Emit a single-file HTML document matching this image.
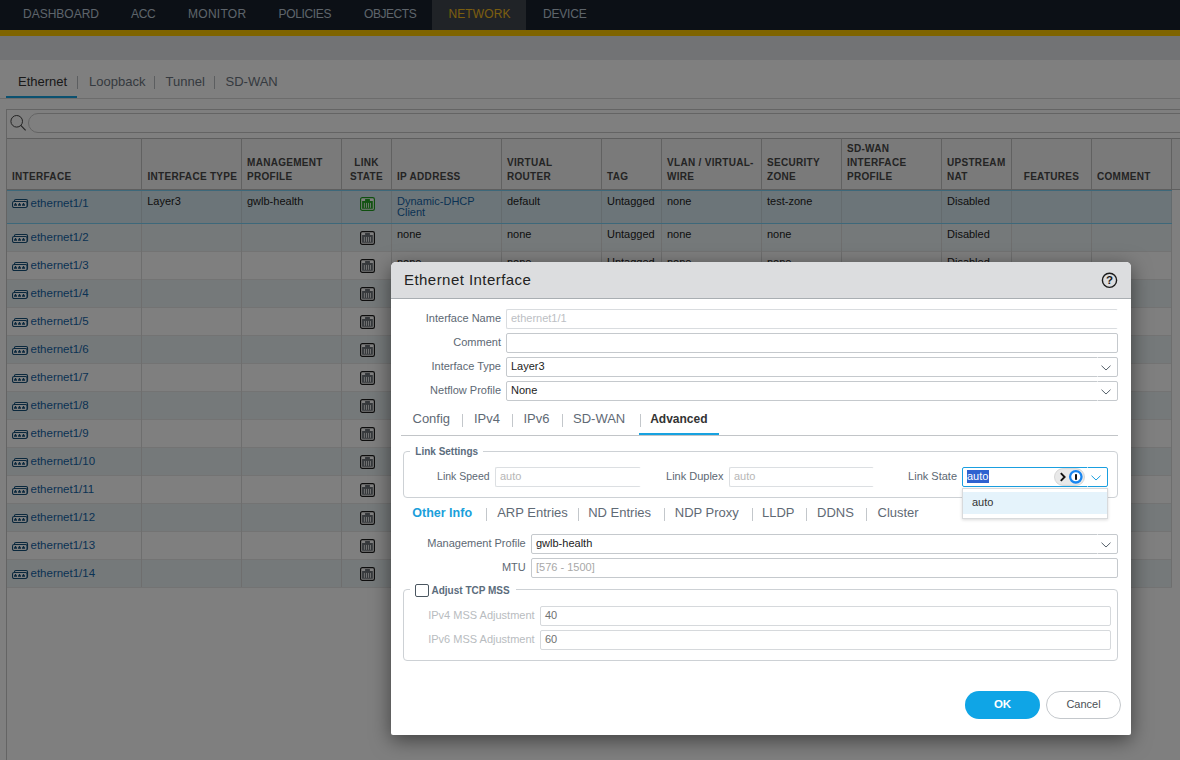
<!DOCTYPE html>
<html><head><meta charset="utf-8"><style>
html,body{margin:0;padding:0;width:1180px;height:760px;overflow:hidden;background:#fff;position:relative}
.t{position:absolute;white-space:nowrap;line-height:20px;font-family:"Liberation Sans", sans-serif}
</style></head><body>
<div style="position:absolute;left:0px;top:0px;width:1180px;height:30px;background:#18202c"></div>
<div style="position:absolute;left:432px;top:0px;width:94px;height:30px;background:#41464e"></div>
<div class="t" style="left:23px;top:3.84px;font-size:12px;font-weight:400;color:#bcc9d6;">DASHBOARD</div>
<div class="t" style="left:131px;top:3.84px;font-size:12px;font-weight:400;color:#bcc9d6;letter-spacing:-0.3px;">ACC</div>
<div class="t" style="left:188px;top:3.84px;font-size:12px;font-weight:400;color:#bcc9d6;letter-spacing:0.28px;">MONITOR</div>
<div class="t" style="left:278.5px;top:3.84px;font-size:12px;font-weight:400;color:#bcc9d6;letter-spacing:-0.35px;">POLICIES</div>
<div class="t" style="left:364px;top:3.84px;font-size:12px;font-weight:400;color:#bcc9d6;letter-spacing:-0.45px;">OBJECTS</div>
<div class="t" style="left:448.5px;top:3.84px;font-size:12px;font-weight:400;color:#f5bd1e;letter-spacing:0.1px;">NETWORK</div>
<div class="t" style="left:543px;top:3.84px;font-size:12px;font-weight:400;color:#bcc9d6;letter-spacing:-0.2px;">DEVICE</div>
<div style="position:absolute;left:0px;top:30px;width:1180px;height:6px;background:#fec800"></div>
<div style="position:absolute;left:0px;top:36px;width:1180px;height:24px;background:#e4e6ea"></div>
<div class="t" style="left:18px;top:71.50px;font-size:13px;font-weight:400;color:#333;">Ethernet</div>
<div class="t" style="left:89px;top:71.50px;font-size:13px;font-weight:400;color:#6b7480;">Loopback</div>
<div class="t" style="left:165.5px;top:71.50px;font-size:13px;font-weight:400;color:#6b7480;">Tunnel</div>
<div class="t" style="left:225.5px;top:71.50px;font-size:13px;font-weight:400;color:#6b7480;">SD-WAN</div>
<div style="position:absolute;left:77px;top:76px;width:1px;height:13px;background:#b8bcc0"></div>
<div style="position:absolute;left:154px;top:76px;width:1px;height:13px;background:#b8bcc0"></div>
<div style="position:absolute;left:214px;top:76px;width:1px;height:13px;background:#b8bcc0"></div>
<div style="position:absolute;left:0px;top:98px;width:1180px;height:1px;background:#d8d8d8"></div>
<div style="position:absolute;left:6px;top:96px;width:71px;height:2px;background:#17a2e0"></div>
<div style="position:absolute;left:6px;top:109px;width:1180px;height:29px;border:1px solid #c8c8c8;box-sizing:border-box;border-right:none;border-bottom:none"></div>
<div style="position:absolute;left:28px;top:113px;width:1200px;height:20px;border:1px solid #c8c8c8;box-sizing:border-box;border-radius:10px"></div>
<svg style="position:absolute;left:8px;top:112px" width="22" height="22"><circle cx="8.7" cy="9.3" r="5.8" fill="none" stroke="#444" stroke-width="1"/><line x1="12.8" y1="13.4" x2="17.6" y2="18.4" stroke="#444" stroke-width="1.1"/></svg>
<div style="position:absolute;left:6px;top:138px;width:1174px;height:52px;background:#f4f4f4"></div>
<div style="position:absolute;left:6px;top:138px;width:1174px;height:1px;background:#bdbdbd"></div>
<div style="position:absolute;left:141.0px;top:138px;width:1px;height:52px;background:#c2c2c2"></div>
<div style="position:absolute;left:241.0px;top:138px;width:1px;height:52px;background:#c2c2c2"></div>
<div style="position:absolute;left:341.0px;top:138px;width:1px;height:52px;background:#c2c2c2"></div>
<div style="position:absolute;left:391.0px;top:138px;width:1px;height:52px;background:#c2c2c2"></div>
<div style="position:absolute;left:501.0px;top:138px;width:1px;height:52px;background:#c2c2c2"></div>
<div style="position:absolute;left:601.0px;top:138px;width:1px;height:52px;background:#c2c2c2"></div>
<div style="position:absolute;left:661.0px;top:138px;width:1px;height:52px;background:#c2c2c2"></div>
<div style="position:absolute;left:761.0px;top:138px;width:1px;height:52px;background:#c2c2c2"></div>
<div style="position:absolute;left:841.0px;top:138px;width:1px;height:52px;background:#c2c2c2"></div>
<div style="position:absolute;left:941.0px;top:138px;width:1px;height:52px;background:#c2c2c2"></div>
<div style="position:absolute;left:1011.0px;top:138px;width:1px;height:52px;background:#c2c2c2"></div>
<div style="position:absolute;left:1091.0px;top:138px;width:1px;height:52px;background:#c2c2c2"></div>
<div style="position:absolute;left:1171.0px;top:138px;width:1px;height:52px;background:#c2c2c2"></div>
<div style="position:absolute;left:6px;top:189px;width:1174px;height:1px;background:#bcbcbc"></div>
<div class="t" style="left:12px;top:166.84px;font-size:10px;font-weight:700;color:#484848;letter-spacing:0.3px;">INTERFACE</div>
<div class="t" style="left:147.5px;top:166.84px;font-size:10px;font-weight:700;color:#484848;letter-spacing:0.3px;">INTERFACE TYPE</div>
<div class="t" style="left:247px;top:152.84px;font-size:10px;font-weight:700;color:#484848;letter-spacing:0.3px;">MANAGEMENT</div>
<div class="t" style="left:247px;top:166.84px;font-size:10px;font-weight:700;color:#484848;letter-spacing:0.3px;">PROFILE</div>
<div class="t" style="left:166.5px;width:400px;text-align:center;top:152.84px;font-size:10px;font-weight:700;color:#484848;letter-spacing:0.3px;">LINK</div>
<div class="t" style="left:166.5px;width:400px;text-align:center;top:166.84px;font-size:10px;font-weight:700;color:#484848;letter-spacing:0.3px;">STATE</div>
<div class="t" style="left:397px;top:166.84px;font-size:10px;font-weight:700;color:#484848;letter-spacing:0.3px;">IP ADDRESS</div>
<div class="t" style="left:507px;top:152.84px;font-size:10px;font-weight:700;color:#484848;letter-spacing:0.3px;">VIRTUAL</div>
<div class="t" style="left:507px;top:166.84px;font-size:10px;font-weight:700;color:#484848;letter-spacing:0.3px;">ROUTER</div>
<div class="t" style="left:607px;top:166.84px;font-size:10px;font-weight:700;color:#484848;letter-spacing:0.3px;">TAG</div>
<div class="t" style="left:667px;top:152.84px;font-size:10px;font-weight:700;color:#484848;letter-spacing:0.3px;">VLAN / VIRTUAL-</div>
<div class="t" style="left:667px;top:166.84px;font-size:10px;font-weight:700;color:#484848;letter-spacing:0.3px;">WIRE</div>
<div class="t" style="left:767px;top:152.84px;font-size:10px;font-weight:700;color:#484848;letter-spacing:0.3px;">SECURITY</div>
<div class="t" style="left:767px;top:166.84px;font-size:10px;font-weight:700;color:#484848;letter-spacing:0.3px;">ZONE</div>
<div class="t" style="left:847px;top:138.84px;font-size:10px;font-weight:700;color:#484848;letter-spacing:0.3px;">SD-WAN</div>
<div class="t" style="left:847px;top:152.84px;font-size:10px;font-weight:700;color:#484848;letter-spacing:0.3px;">INTERFACE</div>
<div class="t" style="left:847px;top:166.84px;font-size:10px;font-weight:700;color:#484848;letter-spacing:0.3px;">PROFILE</div>
<div class="t" style="left:947px;top:152.84px;font-size:10px;font-weight:700;color:#484848;letter-spacing:0.3px;">UPSTREAM</div>
<div class="t" style="left:947px;top:166.84px;font-size:10px;font-weight:700;color:#484848;letter-spacing:0.3px;">NAT</div>
<div class="t" style="left:851.5px;width:400px;text-align:center;top:166.84px;font-size:10px;font-weight:700;color:#484848;letter-spacing:0.3px;">FEATURES</div>
<div class="t" style="left:1097px;top:166.84px;font-size:10px;font-weight:700;color:#484848;letter-spacing:0.3px;">COMMENT</div>
<div style="position:absolute;left:6px;top:190px;width:1165.5px;height:1px;background:#7ad0f5"></div>
<div style="position:absolute;left:6px;top:191px;width:1165.5px;height:32px;background:#d9ebf2"></div>
<div style="position:absolute;left:6px;top:223px;width:1165.5px;height:1px;background:#7ad0f5"></div>
<div style="position:absolute;left:6px;top:224px;width:1165.5px;height:27px;background:#ebf3f5"></div>
<div style="position:absolute;left:6px;top:251px;width:1165.5px;height:1px;background:#e6e6e6"></div>
<div style="position:absolute;left:6px;top:252px;width:1165.5px;height:27px;background:#ffffff"></div>
<div style="position:absolute;left:6px;top:279px;width:1165.5px;height:1px;background:#e6e6e6"></div>
<div style="position:absolute;left:6px;top:280px;width:1165.5px;height:27px;background:#ebf3f5"></div>
<div style="position:absolute;left:6px;top:307px;width:1165.5px;height:1px;background:#e6e6e6"></div>
<div style="position:absolute;left:6px;top:308px;width:1165.5px;height:27px;background:#ffffff"></div>
<div style="position:absolute;left:6px;top:335px;width:1165.5px;height:1px;background:#e6e6e6"></div>
<div style="position:absolute;left:6px;top:336px;width:1165.5px;height:27px;background:#ebf3f5"></div>
<div style="position:absolute;left:6px;top:363px;width:1165.5px;height:1px;background:#e6e6e6"></div>
<div style="position:absolute;left:6px;top:364px;width:1165.5px;height:27px;background:#ffffff"></div>
<div style="position:absolute;left:6px;top:391px;width:1165.5px;height:1px;background:#e6e6e6"></div>
<div style="position:absolute;left:6px;top:392px;width:1165.5px;height:27px;background:#ebf3f5"></div>
<div style="position:absolute;left:6px;top:419px;width:1165.5px;height:1px;background:#e6e6e6"></div>
<div style="position:absolute;left:6px;top:420px;width:1165.5px;height:27px;background:#ffffff"></div>
<div style="position:absolute;left:6px;top:447px;width:1165.5px;height:1px;background:#e6e6e6"></div>
<div style="position:absolute;left:6px;top:448px;width:1165.5px;height:27px;background:#ebf3f5"></div>
<div style="position:absolute;left:6px;top:475px;width:1165.5px;height:1px;background:#e6e6e6"></div>
<div style="position:absolute;left:6px;top:476px;width:1165.5px;height:27px;background:#ffffff"></div>
<div style="position:absolute;left:6px;top:503px;width:1165.5px;height:1px;background:#e6e6e6"></div>
<div style="position:absolute;left:6px;top:504px;width:1165.5px;height:27px;background:#ebf3f5"></div>
<div style="position:absolute;left:6px;top:531px;width:1165.5px;height:1px;background:#e6e6e6"></div>
<div style="position:absolute;left:6px;top:532px;width:1165.5px;height:27px;background:#ffffff"></div>
<div style="position:absolute;left:6px;top:559px;width:1165.5px;height:1px;background:#e6e6e6"></div>
<div style="position:absolute;left:6px;top:560px;width:1165.5px;height:27px;background:#ebf3f5"></div>
<div style="position:absolute;left:6px;top:587px;width:1165.5px;height:1px;background:#e6e6e6"></div>
<div style="position:absolute;left:141.0px;top:191px;width:1px;height:32px;background:#c9d6dc"></div>
<div style="position:absolute;left:141.0px;top:224px;width:1px;height:363px;background:#dcdcdc"></div>
<div style="position:absolute;left:241.0px;top:191px;width:1px;height:32px;background:#c9d6dc"></div>
<div style="position:absolute;left:241.0px;top:224px;width:1px;height:363px;background:#dcdcdc"></div>
<div style="position:absolute;left:341.0px;top:191px;width:1px;height:32px;background:#c9d6dc"></div>
<div style="position:absolute;left:341.0px;top:224px;width:1px;height:363px;background:#dcdcdc"></div>
<div style="position:absolute;left:391.0px;top:191px;width:1px;height:32px;background:#c9d6dc"></div>
<div style="position:absolute;left:391.0px;top:224px;width:1px;height:363px;background:#dcdcdc"></div>
<div style="position:absolute;left:501.0px;top:191px;width:1px;height:32px;background:#c9d6dc"></div>
<div style="position:absolute;left:501.0px;top:224px;width:1px;height:363px;background:#dcdcdc"></div>
<div style="position:absolute;left:601.0px;top:191px;width:1px;height:32px;background:#c9d6dc"></div>
<div style="position:absolute;left:601.0px;top:224px;width:1px;height:363px;background:#dcdcdc"></div>
<div style="position:absolute;left:661.0px;top:191px;width:1px;height:32px;background:#c9d6dc"></div>
<div style="position:absolute;left:661.0px;top:224px;width:1px;height:363px;background:#dcdcdc"></div>
<div style="position:absolute;left:761.0px;top:191px;width:1px;height:32px;background:#c9d6dc"></div>
<div style="position:absolute;left:761.0px;top:224px;width:1px;height:363px;background:#dcdcdc"></div>
<div style="position:absolute;left:841.0px;top:191px;width:1px;height:32px;background:#c9d6dc"></div>
<div style="position:absolute;left:841.0px;top:224px;width:1px;height:363px;background:#dcdcdc"></div>
<div style="position:absolute;left:941.0px;top:191px;width:1px;height:32px;background:#c9d6dc"></div>
<div style="position:absolute;left:941.0px;top:224px;width:1px;height:363px;background:#dcdcdc"></div>
<div style="position:absolute;left:1011.0px;top:191px;width:1px;height:32px;background:#c9d6dc"></div>
<div style="position:absolute;left:1011.0px;top:224px;width:1px;height:363px;background:#dcdcdc"></div>
<div style="position:absolute;left:1091.0px;top:191px;width:1px;height:32px;background:#c9d6dc"></div>
<div style="position:absolute;left:1091.0px;top:224px;width:1px;height:363px;background:#dcdcdc"></div>
<div style="position:absolute;left:1171.0px;top:191px;width:1px;height:32px;background:#c9d6dc"></div>
<div style="position:absolute;left:1171.0px;top:224px;width:1px;height:363px;background:#dcdcdc"></div>
<div style="position:absolute;left:6px;top:138px;width:1px;height:622px;background:#c8c8c8"></div>
<svg style="position:absolute;left:11px;top:198px" width="18" height="11" viewBox="0 0 18 11"><rect x="3.45" y="1.45" width="13.1" height="7.2" rx="1.5" fill="#fff" stroke="#14507a" stroke-width="1.1"/><rect x="1.55" y="3.5" width="14.5" height="6" rx="1.6" fill="#fff" stroke="#14507a" stroke-width="1.1"/><path d="M3.0 7.85 V6.2 H3.85 V4.9 H5.15 V6.2 H6.0 V7.85Z M7.0 7.85 V6.2 H7.85 V4.9 H9.15 V6.2 H10.0 V7.85Z M11.0 7.85 V6.2 H11.85 V4.9 H13.15 V6.2 H14.0 V7.85Z " fill="#14507a"/></svg>
<div class="t" style="left:30.5px;top:192.72px;font-size:11.5px;font-weight:400;color:#1565a8;">ethernet1/1</div>
<svg style="position:absolute;left:360px;top:197px" width="15" height="14" viewBox="0 0 15 14"><rect x="0.6" y="0.6" width="13.8" height="12.8" rx="1.7" fill="#ffffff" stroke="#1f9f1f" stroke-width="1.2"/><path d="M2.1 4.1 H5.1 V2.1 H9.9 V4.1 H12.8 V11.7 H2.1Z" fill="#26a626"/><path d="M4.4 5.9 V10.8 M6.5 5.9 V10.8 M8.5 5.9 V10.8 M10.5 5.9 V10.8 " stroke="#ffffff" stroke-width="0.8"/></svg>
<div class="t" style="left:147.2px;top:191.19px;font-size:11px;font-weight:400;color:#222;">Layer3</div>
<div class="t" style="left:247px;top:191.19px;font-size:11px;font-weight:400;color:#222;">gwlb-health</div>
<div class="t" style="left:397px;top:191.19px;font-size:11px;font-weight:400;color:#1565a8;">Dynamic-DHCP</div>
<div class="t" style="left:397px;top:201.69px;font-size:11px;font-weight:400;color:#1565a8;">Client</div>
<div class="t" style="left:507px;top:191.19px;font-size:11px;font-weight:400;color:#222;">default</div>
<div class="t" style="left:607px;top:191.19px;font-size:11px;font-weight:400;color:#222;">Untagged</div>
<div class="t" style="left:667px;top:191.19px;font-size:11px;font-weight:400;color:#222;">none</div>
<div class="t" style="left:767px;top:191.19px;font-size:11px;font-weight:400;color:#222;">test-zone</div>
<div class="t" style="left:947px;top:191.19px;font-size:11px;font-weight:400;color:#222;">Disabled</div>
<svg style="position:absolute;left:11px;top:232.8px" width="18" height="11" viewBox="0 0 18 11"><rect x="3.45" y="1.45" width="13.1" height="7.2" rx="1.5" fill="#fff" stroke="#14507a" stroke-width="1.1"/><rect x="1.55" y="3.5" width="14.5" height="6" rx="1.6" fill="#fff" stroke="#14507a" stroke-width="1.1"/><path d="M3.0 7.85 V6.2 H3.85 V4.9 H5.15 V6.2 H6.0 V7.85Z M7.0 7.85 V6.2 H7.85 V4.9 H9.15 V6.2 H10.0 V7.85Z M11.0 7.85 V6.2 H11.85 V4.9 H13.15 V6.2 H14.0 V7.85Z " fill="#14507a"/></svg>
<div class="t" style="left:30.5px;top:226.82px;font-size:11.5px;font-weight:400;color:#1565a8;">ethernet1/2</div>
<svg style="position:absolute;left:360px;top:231px" width="15" height="14" viewBox="0 0 15 14"><rect x="0.6" y="0.6" width="13.8" height="12.8" rx="1.7" fill="#ffffff" stroke="#1c1c1c" stroke-width="1.2"/><path d="M2.1 4.1 H5.1 V2.1 H9.9 V4.1 H12.8 V11.7 H2.1Z" fill="#6c7278"/><path d="M4.4 5.9 V10.8 M6.5 5.9 V10.8 M8.5 5.9 V10.8 M10.5 5.9 V10.8 " stroke="#ffffff" stroke-width="0.8"/></svg>
<svg style="position:absolute;left:11px;top:260.8px" width="18" height="11" viewBox="0 0 18 11"><rect x="3.45" y="1.45" width="13.1" height="7.2" rx="1.5" fill="#fff" stroke="#14507a" stroke-width="1.1"/><rect x="1.55" y="3.5" width="14.5" height="6" rx="1.6" fill="#fff" stroke="#14507a" stroke-width="1.1"/><path d="M3.0 7.85 V6.2 H3.85 V4.9 H5.15 V6.2 H6.0 V7.85Z M7.0 7.85 V6.2 H7.85 V4.9 H9.15 V6.2 H10.0 V7.85Z M11.0 7.85 V6.2 H11.85 V4.9 H13.15 V6.2 H14.0 V7.85Z " fill="#14507a"/></svg>
<div class="t" style="left:30.5px;top:254.82px;font-size:11.5px;font-weight:400;color:#1565a8;">ethernet1/3</div>
<svg style="position:absolute;left:360px;top:259px" width="15" height="14" viewBox="0 0 15 14"><rect x="0.6" y="0.6" width="13.8" height="12.8" rx="1.7" fill="#ffffff" stroke="#1c1c1c" stroke-width="1.2"/><path d="M2.1 4.1 H5.1 V2.1 H9.9 V4.1 H12.8 V11.7 H2.1Z" fill="#6c7278"/><path d="M4.4 5.9 V10.8 M6.5 5.9 V10.8 M8.5 5.9 V10.8 M10.5 5.9 V10.8 " stroke="#ffffff" stroke-width="0.8"/></svg>
<svg style="position:absolute;left:11px;top:288.8px" width="18" height="11" viewBox="0 0 18 11"><rect x="3.45" y="1.45" width="13.1" height="7.2" rx="1.5" fill="#fff" stroke="#14507a" stroke-width="1.1"/><rect x="1.55" y="3.5" width="14.5" height="6" rx="1.6" fill="#fff" stroke="#14507a" stroke-width="1.1"/><path d="M3.0 7.85 V6.2 H3.85 V4.9 H5.15 V6.2 H6.0 V7.85Z M7.0 7.85 V6.2 H7.85 V4.9 H9.15 V6.2 H10.0 V7.85Z M11.0 7.85 V6.2 H11.85 V4.9 H13.15 V6.2 H14.0 V7.85Z " fill="#14507a"/></svg>
<div class="t" style="left:30.5px;top:282.82px;font-size:11.5px;font-weight:400;color:#1565a8;">ethernet1/4</div>
<svg style="position:absolute;left:360px;top:287px" width="15" height="14" viewBox="0 0 15 14"><rect x="0.6" y="0.6" width="13.8" height="12.8" rx="1.7" fill="#ffffff" stroke="#1c1c1c" stroke-width="1.2"/><path d="M2.1 4.1 H5.1 V2.1 H9.9 V4.1 H12.8 V11.7 H2.1Z" fill="#6c7278"/><path d="M4.4 5.9 V10.8 M6.5 5.9 V10.8 M8.5 5.9 V10.8 M10.5 5.9 V10.8 " stroke="#ffffff" stroke-width="0.8"/></svg>
<svg style="position:absolute;left:11px;top:316.8px" width="18" height="11" viewBox="0 0 18 11"><rect x="3.45" y="1.45" width="13.1" height="7.2" rx="1.5" fill="#fff" stroke="#14507a" stroke-width="1.1"/><rect x="1.55" y="3.5" width="14.5" height="6" rx="1.6" fill="#fff" stroke="#14507a" stroke-width="1.1"/><path d="M3.0 7.85 V6.2 H3.85 V4.9 H5.15 V6.2 H6.0 V7.85Z M7.0 7.85 V6.2 H7.85 V4.9 H9.15 V6.2 H10.0 V7.85Z M11.0 7.85 V6.2 H11.85 V4.9 H13.15 V6.2 H14.0 V7.85Z " fill="#14507a"/></svg>
<div class="t" style="left:30.5px;top:310.82px;font-size:11.5px;font-weight:400;color:#1565a8;">ethernet1/5</div>
<svg style="position:absolute;left:360px;top:315px" width="15" height="14" viewBox="0 0 15 14"><rect x="0.6" y="0.6" width="13.8" height="12.8" rx="1.7" fill="#ffffff" stroke="#1c1c1c" stroke-width="1.2"/><path d="M2.1 4.1 H5.1 V2.1 H9.9 V4.1 H12.8 V11.7 H2.1Z" fill="#6c7278"/><path d="M4.4 5.9 V10.8 M6.5 5.9 V10.8 M8.5 5.9 V10.8 M10.5 5.9 V10.8 " stroke="#ffffff" stroke-width="0.8"/></svg>
<svg style="position:absolute;left:11px;top:344.8px" width="18" height="11" viewBox="0 0 18 11"><rect x="3.45" y="1.45" width="13.1" height="7.2" rx="1.5" fill="#fff" stroke="#14507a" stroke-width="1.1"/><rect x="1.55" y="3.5" width="14.5" height="6" rx="1.6" fill="#fff" stroke="#14507a" stroke-width="1.1"/><path d="M3.0 7.85 V6.2 H3.85 V4.9 H5.15 V6.2 H6.0 V7.85Z M7.0 7.85 V6.2 H7.85 V4.9 H9.15 V6.2 H10.0 V7.85Z M11.0 7.85 V6.2 H11.85 V4.9 H13.15 V6.2 H14.0 V7.85Z " fill="#14507a"/></svg>
<div class="t" style="left:30.5px;top:338.82px;font-size:11.5px;font-weight:400;color:#1565a8;">ethernet1/6</div>
<svg style="position:absolute;left:360px;top:343px" width="15" height="14" viewBox="0 0 15 14"><rect x="0.6" y="0.6" width="13.8" height="12.8" rx="1.7" fill="#ffffff" stroke="#1c1c1c" stroke-width="1.2"/><path d="M2.1 4.1 H5.1 V2.1 H9.9 V4.1 H12.8 V11.7 H2.1Z" fill="#6c7278"/><path d="M4.4 5.9 V10.8 M6.5 5.9 V10.8 M8.5 5.9 V10.8 M10.5 5.9 V10.8 " stroke="#ffffff" stroke-width="0.8"/></svg>
<svg style="position:absolute;left:11px;top:372.8px" width="18" height="11" viewBox="0 0 18 11"><rect x="3.45" y="1.45" width="13.1" height="7.2" rx="1.5" fill="#fff" stroke="#14507a" stroke-width="1.1"/><rect x="1.55" y="3.5" width="14.5" height="6" rx="1.6" fill="#fff" stroke="#14507a" stroke-width="1.1"/><path d="M3.0 7.85 V6.2 H3.85 V4.9 H5.15 V6.2 H6.0 V7.85Z M7.0 7.85 V6.2 H7.85 V4.9 H9.15 V6.2 H10.0 V7.85Z M11.0 7.85 V6.2 H11.85 V4.9 H13.15 V6.2 H14.0 V7.85Z " fill="#14507a"/></svg>
<div class="t" style="left:30.5px;top:366.82px;font-size:11.5px;font-weight:400;color:#1565a8;">ethernet1/7</div>
<svg style="position:absolute;left:360px;top:371px" width="15" height="14" viewBox="0 0 15 14"><rect x="0.6" y="0.6" width="13.8" height="12.8" rx="1.7" fill="#ffffff" stroke="#1c1c1c" stroke-width="1.2"/><path d="M2.1 4.1 H5.1 V2.1 H9.9 V4.1 H12.8 V11.7 H2.1Z" fill="#6c7278"/><path d="M4.4 5.9 V10.8 M6.5 5.9 V10.8 M8.5 5.9 V10.8 M10.5 5.9 V10.8 " stroke="#ffffff" stroke-width="0.8"/></svg>
<svg style="position:absolute;left:11px;top:400.8px" width="18" height="11" viewBox="0 0 18 11"><rect x="3.45" y="1.45" width="13.1" height="7.2" rx="1.5" fill="#fff" stroke="#14507a" stroke-width="1.1"/><rect x="1.55" y="3.5" width="14.5" height="6" rx="1.6" fill="#fff" stroke="#14507a" stroke-width="1.1"/><path d="M3.0 7.85 V6.2 H3.85 V4.9 H5.15 V6.2 H6.0 V7.85Z M7.0 7.85 V6.2 H7.85 V4.9 H9.15 V6.2 H10.0 V7.85Z M11.0 7.85 V6.2 H11.85 V4.9 H13.15 V6.2 H14.0 V7.85Z " fill="#14507a"/></svg>
<div class="t" style="left:30.5px;top:394.82px;font-size:11.5px;font-weight:400;color:#1565a8;">ethernet1/8</div>
<svg style="position:absolute;left:360px;top:399px" width="15" height="14" viewBox="0 0 15 14"><rect x="0.6" y="0.6" width="13.8" height="12.8" rx="1.7" fill="#ffffff" stroke="#1c1c1c" stroke-width="1.2"/><path d="M2.1 4.1 H5.1 V2.1 H9.9 V4.1 H12.8 V11.7 H2.1Z" fill="#6c7278"/><path d="M4.4 5.9 V10.8 M6.5 5.9 V10.8 M8.5 5.9 V10.8 M10.5 5.9 V10.8 " stroke="#ffffff" stroke-width="0.8"/></svg>
<svg style="position:absolute;left:11px;top:428.8px" width="18" height="11" viewBox="0 0 18 11"><rect x="3.45" y="1.45" width="13.1" height="7.2" rx="1.5" fill="#fff" stroke="#14507a" stroke-width="1.1"/><rect x="1.55" y="3.5" width="14.5" height="6" rx="1.6" fill="#fff" stroke="#14507a" stroke-width="1.1"/><path d="M3.0 7.85 V6.2 H3.85 V4.9 H5.15 V6.2 H6.0 V7.85Z M7.0 7.85 V6.2 H7.85 V4.9 H9.15 V6.2 H10.0 V7.85Z M11.0 7.85 V6.2 H11.85 V4.9 H13.15 V6.2 H14.0 V7.85Z " fill="#14507a"/></svg>
<div class="t" style="left:30.5px;top:422.82px;font-size:11.5px;font-weight:400;color:#1565a8;">ethernet1/9</div>
<svg style="position:absolute;left:360px;top:427px" width="15" height="14" viewBox="0 0 15 14"><rect x="0.6" y="0.6" width="13.8" height="12.8" rx="1.7" fill="#ffffff" stroke="#1c1c1c" stroke-width="1.2"/><path d="M2.1 4.1 H5.1 V2.1 H9.9 V4.1 H12.8 V11.7 H2.1Z" fill="#6c7278"/><path d="M4.4 5.9 V10.8 M6.5 5.9 V10.8 M8.5 5.9 V10.8 M10.5 5.9 V10.8 " stroke="#ffffff" stroke-width="0.8"/></svg>
<svg style="position:absolute;left:11px;top:456.8px" width="18" height="11" viewBox="0 0 18 11"><rect x="3.45" y="1.45" width="13.1" height="7.2" rx="1.5" fill="#fff" stroke="#14507a" stroke-width="1.1"/><rect x="1.55" y="3.5" width="14.5" height="6" rx="1.6" fill="#fff" stroke="#14507a" stroke-width="1.1"/><path d="M3.0 7.85 V6.2 H3.85 V4.9 H5.15 V6.2 H6.0 V7.85Z M7.0 7.85 V6.2 H7.85 V4.9 H9.15 V6.2 H10.0 V7.85Z M11.0 7.85 V6.2 H11.85 V4.9 H13.15 V6.2 H14.0 V7.85Z " fill="#14507a"/></svg>
<div class="t" style="left:30.5px;top:450.82px;font-size:11.5px;font-weight:400;color:#1565a8;">ethernet1/10</div>
<svg style="position:absolute;left:360px;top:455px" width="15" height="14" viewBox="0 0 15 14"><rect x="0.6" y="0.6" width="13.8" height="12.8" rx="1.7" fill="#ffffff" stroke="#1c1c1c" stroke-width="1.2"/><path d="M2.1 4.1 H5.1 V2.1 H9.9 V4.1 H12.8 V11.7 H2.1Z" fill="#6c7278"/><path d="M4.4 5.9 V10.8 M6.5 5.9 V10.8 M8.5 5.9 V10.8 M10.5 5.9 V10.8 " stroke="#ffffff" stroke-width="0.8"/></svg>
<svg style="position:absolute;left:11px;top:484.8px" width="18" height="11" viewBox="0 0 18 11"><rect x="3.45" y="1.45" width="13.1" height="7.2" rx="1.5" fill="#fff" stroke="#14507a" stroke-width="1.1"/><rect x="1.55" y="3.5" width="14.5" height="6" rx="1.6" fill="#fff" stroke="#14507a" stroke-width="1.1"/><path d="M3.0 7.85 V6.2 H3.85 V4.9 H5.15 V6.2 H6.0 V7.85Z M7.0 7.85 V6.2 H7.85 V4.9 H9.15 V6.2 H10.0 V7.85Z M11.0 7.85 V6.2 H11.85 V4.9 H13.15 V6.2 H14.0 V7.85Z " fill="#14507a"/></svg>
<div class="t" style="left:30.5px;top:478.82px;font-size:11.5px;font-weight:400;color:#1565a8;">ethernet1/11</div>
<svg style="position:absolute;left:360px;top:483px" width="15" height="14" viewBox="0 0 15 14"><rect x="0.6" y="0.6" width="13.8" height="12.8" rx="1.7" fill="#ffffff" stroke="#1c1c1c" stroke-width="1.2"/><path d="M2.1 4.1 H5.1 V2.1 H9.9 V4.1 H12.8 V11.7 H2.1Z" fill="#6c7278"/><path d="M4.4 5.9 V10.8 M6.5 5.9 V10.8 M8.5 5.9 V10.8 M10.5 5.9 V10.8 " stroke="#ffffff" stroke-width="0.8"/></svg>
<svg style="position:absolute;left:11px;top:512.8px" width="18" height="11" viewBox="0 0 18 11"><rect x="3.45" y="1.45" width="13.1" height="7.2" rx="1.5" fill="#fff" stroke="#14507a" stroke-width="1.1"/><rect x="1.55" y="3.5" width="14.5" height="6" rx="1.6" fill="#fff" stroke="#14507a" stroke-width="1.1"/><path d="M3.0 7.85 V6.2 H3.85 V4.9 H5.15 V6.2 H6.0 V7.85Z M7.0 7.85 V6.2 H7.85 V4.9 H9.15 V6.2 H10.0 V7.85Z M11.0 7.85 V6.2 H11.85 V4.9 H13.15 V6.2 H14.0 V7.85Z " fill="#14507a"/></svg>
<div class="t" style="left:30.5px;top:506.82px;font-size:11.5px;font-weight:400;color:#1565a8;">ethernet1/12</div>
<svg style="position:absolute;left:360px;top:511px" width="15" height="14" viewBox="0 0 15 14"><rect x="0.6" y="0.6" width="13.8" height="12.8" rx="1.7" fill="#ffffff" stroke="#1c1c1c" stroke-width="1.2"/><path d="M2.1 4.1 H5.1 V2.1 H9.9 V4.1 H12.8 V11.7 H2.1Z" fill="#6c7278"/><path d="M4.4 5.9 V10.8 M6.5 5.9 V10.8 M8.5 5.9 V10.8 M10.5 5.9 V10.8 " stroke="#ffffff" stroke-width="0.8"/></svg>
<svg style="position:absolute;left:11px;top:540.8px" width="18" height="11" viewBox="0 0 18 11"><rect x="3.45" y="1.45" width="13.1" height="7.2" rx="1.5" fill="#fff" stroke="#14507a" stroke-width="1.1"/><rect x="1.55" y="3.5" width="14.5" height="6" rx="1.6" fill="#fff" stroke="#14507a" stroke-width="1.1"/><path d="M3.0 7.85 V6.2 H3.85 V4.9 H5.15 V6.2 H6.0 V7.85Z M7.0 7.85 V6.2 H7.85 V4.9 H9.15 V6.2 H10.0 V7.85Z M11.0 7.85 V6.2 H11.85 V4.9 H13.15 V6.2 H14.0 V7.85Z " fill="#14507a"/></svg>
<div class="t" style="left:30.5px;top:534.82px;font-size:11.5px;font-weight:400;color:#1565a8;">ethernet1/13</div>
<svg style="position:absolute;left:360px;top:539px" width="15" height="14" viewBox="0 0 15 14"><rect x="0.6" y="0.6" width="13.8" height="12.8" rx="1.7" fill="#ffffff" stroke="#1c1c1c" stroke-width="1.2"/><path d="M2.1 4.1 H5.1 V2.1 H9.9 V4.1 H12.8 V11.7 H2.1Z" fill="#6c7278"/><path d="M4.4 5.9 V10.8 M6.5 5.9 V10.8 M8.5 5.9 V10.8 M10.5 5.9 V10.8 " stroke="#ffffff" stroke-width="0.8"/></svg>
<svg style="position:absolute;left:11px;top:568.8px" width="18" height="11" viewBox="0 0 18 11"><rect x="3.45" y="1.45" width="13.1" height="7.2" rx="1.5" fill="#fff" stroke="#14507a" stroke-width="1.1"/><rect x="1.55" y="3.5" width="14.5" height="6" rx="1.6" fill="#fff" stroke="#14507a" stroke-width="1.1"/><path d="M3.0 7.85 V6.2 H3.85 V4.9 H5.15 V6.2 H6.0 V7.85Z M7.0 7.85 V6.2 H7.85 V4.9 H9.15 V6.2 H10.0 V7.85Z M11.0 7.85 V6.2 H11.85 V4.9 H13.15 V6.2 H14.0 V7.85Z " fill="#14507a"/></svg>
<div class="t" style="left:30.5px;top:562.82px;font-size:11.5px;font-weight:400;color:#1565a8;">ethernet1/14</div>
<svg style="position:absolute;left:360px;top:567px" width="15" height="14" viewBox="0 0 15 14"><rect x="0.6" y="0.6" width="13.8" height="12.8" rx="1.7" fill="#ffffff" stroke="#1c1c1c" stroke-width="1.2"/><path d="M2.1 4.1 H5.1 V2.1 H9.9 V4.1 H12.8 V11.7 H2.1Z" fill="#6c7278"/><path d="M4.4 5.9 V10.8 M6.5 5.9 V10.8 M8.5 5.9 V10.8 M10.5 5.9 V10.8 " stroke="#ffffff" stroke-width="0.8"/></svg>
<div class="t" style="left:397px;top:224.49px;font-size:11px;font-weight:400;color:#222;">none</div>
<div class="t" style="left:507px;top:224.49px;font-size:11px;font-weight:400;color:#222;">none</div>
<div class="t" style="left:607px;top:224.49px;font-size:11px;font-weight:400;color:#222;">Untagged</div>
<div class="t" style="left:667px;top:224.49px;font-size:11px;font-weight:400;color:#222;">none</div>
<div class="t" style="left:767px;top:224.49px;font-size:11px;font-weight:400;color:#222;">none</div>
<div class="t" style="left:947px;top:224.49px;font-size:11px;font-weight:400;color:#222;">Disabled</div>
<div class="t" style="left:397px;top:252.49px;font-size:11px;font-weight:400;color:#222;">none</div>
<div class="t" style="left:507px;top:252.49px;font-size:11px;font-weight:400;color:#222;">none</div>
<div class="t" style="left:607px;top:252.49px;font-size:11px;font-weight:400;color:#222;">Untagged</div>
<div class="t" style="left:667px;top:252.49px;font-size:11px;font-weight:400;color:#222;">none</div>
<div class="t" style="left:767px;top:252.49px;font-size:11px;font-weight:400;color:#222;">none</div>
<div class="t" style="left:947px;top:252.49px;font-size:11px;font-weight:400;color:#222;">Disabled</div>
<div style="position:absolute;left:0px;top:0px;width:1180px;height:760px;background:rgba(0,0,0,0.5)"></div>
<div style="position:absolute;left:391px;top:262px;width:740px;height:473px;background:#fff;border-radius:5px 5px 2px 2px;box-shadow:0 5px 20px rgba(0,0,0,0.5)"></div>
<div style="position:absolute;left:391px;top:262px;width:740px;height:36px;background:#dcdddf;border-radius:5px 5px 0 0"></div>
<div style="position:absolute;left:391px;top:297.5px;width:740px;height:1px;background:#a9aeb2"></div>
<div class="t" style="left:404px;top:269.80px;font-size:15px;font-weight:400;color:#222;letter-spacing:0.45px;">Ethernet Interface</div>
<svg style="position:absolute;left:1100px;top:271px" width="19" height="19" viewBox="0 0 19 19"><circle cx="9.5" cy="9.3" r="7.1" fill="none" stroke="#1a1a1a" stroke-width="1.4"/><text x="9.5" y="13.4" text-anchor="middle" font-family="Liberation Sans" font-weight="700" font-size="11.5" fill="#1a1a1a">?</text></svg>
<div class="t" style="right:679px;text-align:right;top:308.19px;font-size:11px;font-weight:400;color:#5d6873;">Interface Name</div>
<div style="position:absolute;left:506px;top:309px;width:612px;height:20px;border:1px solid #d9dcdf;box-sizing:border-box;border-radius:2px;background:#fff;border-right-color:#fff"></div>
<div class="t" style="left:511px;top:307.89px;font-size:11px;font-weight:400;color:#bcc0c4;">ethernet1/1</div>
<div class="t" style="right:679px;text-align:right;top:332.19px;font-size:11px;font-weight:400;color:#5d6873;">Comment</div>
<div style="position:absolute;left:506px;top:333px;width:612px;height:20px;border:1px solid #c5c9cd;box-sizing:border-box;border-radius:2px;background:#fff;"></div>
<div class="t" style="right:679px;text-align:right;top:356.19px;font-size:11px;font-weight:400;color:#5d6873;">Interface Type</div>
<div style="position:absolute;left:506px;top:357px;width:612px;height:20px;border:1px solid #c5c9cd;box-sizing:border-box;border-radius:2px;background:#fff;"></div>
<div class="t" style="left:511px;top:355.89px;font-size:11px;font-weight:400;color:#222;">Layer3</div>
<div style="position:absolute;left:1097px;top:357px;width:1px;height:1px;background:#e6e8ea"></div>
<div style="position:absolute;left:1097px;top:376px;width:1px;height:1px;background:#e6e8ea"></div>
<svg style="position:absolute;left:1099.5px;top:364.1px" width="12" height="8" viewBox="0 0 12 8"><path d="M1.5 1.7 L6 6 L10.5 1.7" fill="none" stroke="#56616b" stroke-width="1"/></svg>
<div class="t" style="right:679px;text-align:right;top:380.19px;font-size:11px;font-weight:400;color:#5d6873;">Netflow Profile</div>
<div style="position:absolute;left:506px;top:381px;width:612px;height:20px;border:1px solid #c5c9cd;box-sizing:border-box;border-radius:2px;background:#fff;"></div>
<div class="t" style="left:511px;top:379.89px;font-size:11px;font-weight:400;color:#222;">None</div>
<div style="position:absolute;left:1097px;top:381px;width:1px;height:1px;background:#e6e8ea"></div>
<div style="position:absolute;left:1097px;top:400px;width:1px;height:1px;background:#e6e8ea"></div>
<svg style="position:absolute;left:1099.5px;top:388.1px" width="12" height="8" viewBox="0 0 12 8"><path d="M1.5 1.7 L6 6 L10.5 1.7" fill="none" stroke="#56616b" stroke-width="1"/></svg>
<div class="t" style="left:412.5px;top:408.50px;font-size:13px;font-weight:400;color:#5f6a75;">Config</div>
<div class="t" style="left:474px;top:408.50px;font-size:13px;font-weight:400;color:#5f6a75;">IPv4</div>
<div class="t" style="left:523.5px;top:408.50px;font-size:13px;font-weight:400;color:#5f6a75;">IPv6</div>
<div class="t" style="left:573px;top:408.50px;font-size:13px;font-weight:400;color:#5f6a75;">SD-WAN</div>
<div class="t" style="left:650.2px;top:408.84px;font-size:12px;font-weight:700;color:#333;">Advanced</div>
<div style="position:absolute;left:462px;top:414px;width:1px;height:12.5px;background:#c3c7cb"></div>
<div style="position:absolute;left:512px;top:414px;width:1px;height:12.5px;background:#c3c7cb"></div>
<div style="position:absolute;left:562px;top:414px;width:1px;height:12.5px;background:#c3c7cb"></div>
<div style="position:absolute;left:639.5px;top:414px;width:1px;height:12.5px;background:#c3c7cb"></div>
<div style="position:absolute;left:401px;top:435px;width:717px;height:1px;background:#c2c5c8"></div>
<div style="position:absolute;left:639px;top:433px;width:80px;height:2px;background:#17a2e0"></div>
<div style="position:absolute;left:403px;top:451px;width:715px;height:47px;border:1px solid #cdd1d5;box-sizing:border-box;border-radius:4px"></div>
<div style="position:absolute;left:410px;top:448px;width:73px;height:6px;background:#fff"></div>
<div class="t" style="left:415.3px;top:442.04px;font-size:10px;font-weight:700;color:#5b6c7c;">Link Settings</div>
<div class="t" style="right:690.4px;text-align:right;top:466.36px;font-size:10.5px;font-weight:400;color:#5d6873;">Link Speed</div>
<div style="position:absolute;left:495px;top:467px;width:146px;height:20px;border:1px solid #dcdfe2;box-sizing:border-box;border-radius:2px;background:#fff;border-right-color:#fff"></div>
<div class="t" style="left:500px;top:466.19px;font-size:11px;font-weight:400;color:#b6b6b6;">auto</div>
<div class="t" style="right:456.5px;text-align:right;top:466.19px;font-size:11px;font-weight:400;color:#5d6873;">Link Duplex</div>
<div style="position:absolute;left:729px;top:467px;width:145px;height:20px;border:1px solid #dcdfe2;box-sizing:border-box;border-radius:2px;background:#fff;border-right-color:#fff"></div>
<div class="t" style="left:734px;top:466.19px;font-size:11px;font-weight:400;color:#b6b6b6;">auto</div>
<div class="t" style="right:223px;text-align:right;top:466.19px;font-size:11px;font-weight:400;color:#5d6873;">Link State</div>
<div style="position:absolute;left:962px;top:467px;width:146px;height:20px;border:1px solid #1a9fe0;box-sizing:border-box;border-radius:2px;background:#fff;"></div>
<div style="position:absolute;left:967px;top:470px;width:22.3px;height:12.7px;background:#2f62d0"></div>
<div class="t" style="left:967px;top:466.19px;font-size:11px;font-weight:400;color:#fff;">auto</div>
<svg style="position:absolute;left:1053px;top:468px" width="33" height="18" viewBox="0 0 33 18"><rect x="1.5" y="0.6" width="30" height="16.8" rx="8.4" fill="#e9e9e9" stroke="#cfcfcf" stroke-width="0.8"/><path d="M7.8 5.2 L11.6 9 L7.8 12.8" fill="none" stroke="#111" stroke-width="1.9"/><circle cx="22.8" cy="8.8" r="5.7" fill="#fff" stroke="#1a86f0" stroke-width="2.3"/><rect x="22" y="6.2" width="2" height="5.6" fill="#111"/></svg>
<div style="position:absolute;left:1087px;top:467px;width:1px;height:1px;background:#a8dcf5"></div>
<div style="position:absolute;left:1087px;top:486px;width:1px;height:1px;background:#a8dcf5"></div>
<svg style="position:absolute;left:1089.5px;top:474.2px" width="12" height="8" viewBox="0 0 12 8"><path d="M1.5 1.7 L6 6 L10.5 1.7" fill="none" stroke="#1a9fe0" stroke-width="1"/></svg>
<div style="position:absolute;left:962px;top:487.5px;width:146px;height:31px;background:#fff;border:1px solid #d8dadc;box-sizing:border-box;box-shadow:0 1px 3px rgba(0,0,0,0.15)"></div>
<div style="position:absolute;left:963px;top:492px;width:144px;height:22px;background:#e5f3fb"></div>
<div class="t" style="left:972px;top:492.19px;font-size:11px;font-weight:400;color:#333;">auto</div>
<div class="t" style="left:412.3px;top:502.67px;font-size:12.5px;font-weight:700;color:#1a9fdb;">Other Info</div>
<div class="t" style="left:497.2px;top:502.50px;font-size:13px;font-weight:400;color:#5f6a75;">ARP Entries</div>
<div class="t" style="left:588.2px;top:502.50px;font-size:13px;font-weight:400;color:#5f6a75;">ND Entries</div>
<div class="t" style="left:674.8px;top:502.50px;font-size:13px;font-weight:400;color:#5f6a75;">NDP Proxy</div>
<div class="t" style="left:762px;top:502.50px;font-size:13px;font-weight:400;color:#5f6a75;">LLDP</div>
<div class="t" style="left:817px;top:502.50px;font-size:13px;font-weight:400;color:#5f6a75;">DDNS</div>
<div class="t" style="left:877.5px;top:502.50px;font-size:13px;font-weight:400;color:#5f6a75;">Cluster</div>
<div style="position:absolute;left:486px;top:508px;width:1px;height:12.5px;background:#c3c7cb"></div>
<div style="position:absolute;left:577.5px;top:508px;width:1px;height:12.5px;background:#c3c7cb"></div>
<div style="position:absolute;left:664.2px;top:508px;width:1px;height:12.5px;background:#c3c7cb"></div>
<div style="position:absolute;left:751.7px;top:508px;width:1px;height:12.5px;background:#c3c7cb"></div>
<div style="position:absolute;left:806.4px;top:508px;width:1px;height:12.5px;background:#c3c7cb"></div>
<div style="position:absolute;left:866.3px;top:508px;width:1px;height:12.5px;background:#c3c7cb"></div>
<div class="t" style="right:654.3px;text-align:right;top:533.19px;font-size:11px;font-weight:400;color:#5d6873;">Management Profile</div>
<div style="position:absolute;left:531px;top:534px;width:587px;height:20px;border:1px solid #c5c9cd;box-sizing:border-box;border-radius:2px;background:#fff;"></div>
<div class="t" style="left:536px;top:532.89px;font-size:11px;font-weight:400;color:#222;">gwlb-health</div>
<div style="position:absolute;left:1097px;top:534px;width:1px;height:1px;background:#e6e8ea"></div>
<div style="position:absolute;left:1097px;top:553px;width:1px;height:1px;background:#e6e8ea"></div>
<svg style="position:absolute;left:1099.5px;top:541.1px" width="12" height="8" viewBox="0 0 12 8"><path d="M1.5 1.7 L6 6 L10.5 1.7" fill="none" stroke="#56616b" stroke-width="1"/></svg>
<div class="t" style="right:654.3px;text-align:right;top:557.19px;font-size:11px;font-weight:400;color:#5d6873;">MTU</div>
<div style="position:absolute;left:531px;top:558px;width:587px;height:20px;border:1px solid #c5c9cd;box-sizing:border-box;border-radius:2px;background:#fff;"></div>
<div class="t" style="left:536px;top:556.89px;font-size:11px;font-weight:400;color:#a8a8a8;">[576 - 1500]</div>
<div style="position:absolute;left:403px;top:589px;width:715px;height:72px;border:1px solid #cdd1d5;box-sizing:border-box;border-radius:4px"></div>
<div style="position:absolute;left:410px;top:585px;width:106px;height:8px;background:#fff"></div>
<div style="position:absolute;left:415px;top:583.5px;width:13.5px;height:13.5px;border:1.2px solid #4a5660;box-sizing:border-box;border-radius:2px;background:#fff"></div>
<div class="t" style="left:431.5px;top:580.53px;font-size:10px;font-weight:700;color:#5b6c7c;">Adjust TCP MSS</div>
<div class="t" style="right:645.4px;text-align:right;top:605.19px;font-size:11px;font-weight:400;color:#b8bcc0;">IPv4 MSS Adjustment</div>
<div style="position:absolute;left:540px;top:606px;width:571px;height:20px;border:1px solid #d6d9dc;box-sizing:border-box;border-radius:2px;background:#fff;"></div>
<div class="t" style="left:545px;top:604.89px;font-size:11px;font-weight:400;color:#707070;">40</div>
<div class="t" style="right:645.4px;text-align:right;top:629.19px;font-size:11px;font-weight:400;color:#b8bcc0;">IPv6 MSS Adjustment</div>
<div style="position:absolute;left:540px;top:630px;width:571px;height:20px;border:1px solid #d6d9dc;box-sizing:border-box;border-radius:2px;background:#fff;"></div>
<div class="t" style="left:545px;top:628.89px;font-size:11px;font-weight:400;color:#707070;">60</div>
<div style="position:absolute;left:965px;top:691px;width:75px;height:28px;background:#0fa5e6;border-radius:14px"></div>
<div class="t" style="left:802.5px;width:400px;text-align:center;top:694.32px;font-size:11.5px;font-weight:700;color:#fff;">OK</div>
<div style="position:absolute;left:1046px;top:691px;width:75px;height:28px;background:#fff;border:1px solid #c4c8cc;box-sizing:border-box;border-radius:14px"></div>
<div class="t" style="left:883.5px;width:400px;text-align:center;top:694.49px;font-size:11px;font-weight:400;color:#4a4f55;">Cancel</div>
</body></html>
